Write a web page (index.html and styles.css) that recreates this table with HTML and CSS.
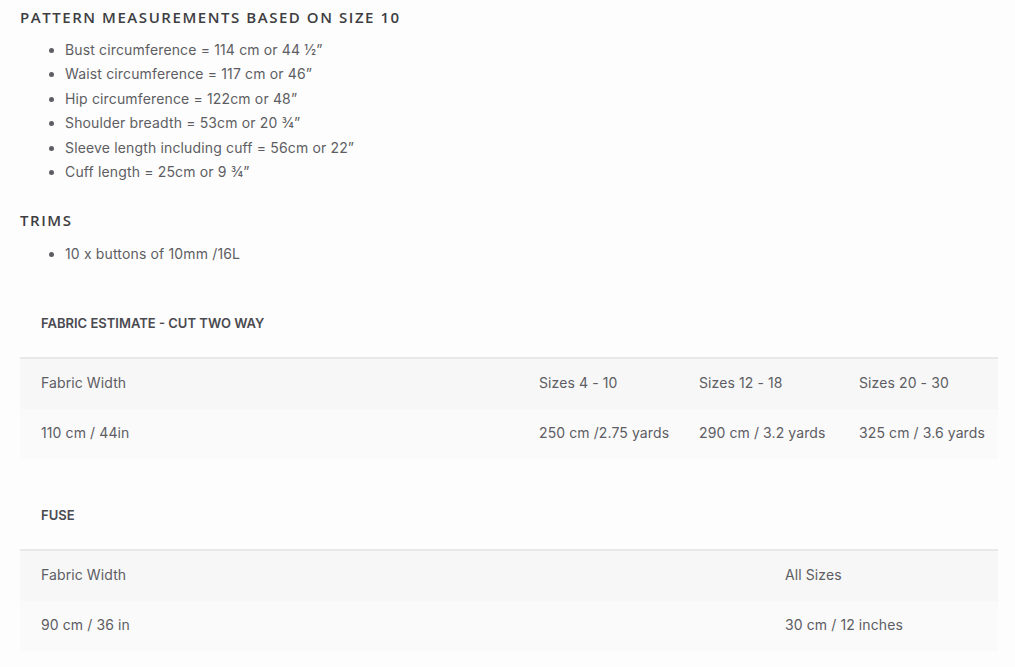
FILE: index.html
```html
<!DOCTYPE html>
<html lang="en">
<head>
<meta charset="utf-8">
<title>Pattern measurements</title>
<link rel="stylesheet" href="styles.css">
</head>
<body>
<main class="content">
  <h2 class="section-title">Pattern measurements based on size 10</h2>
  <ul class="spec-list">
    <li>Bust circumference = 114 cm or 44 ½”</li>
    <li>Waist circumference = 117 cm or 46”</li>
    <li>Hip circumference = 122cm or 48”</li>
    <li>Shoulder breadth = 53cm or 20 ¾”</li>
    <li>Sleeve length including cuff = 56cm or 22”</li>
    <li>Cuff length = 25cm or 9 ¾”</li>
  </ul>

  <h2 class="section-title section-title--trims">Trims</h2>
  <ul class="spec-list spec-list--trims">
    <li>10 x buttons of 10mm /16L</li>
  </ul>

  <table class="spec-table spec-table--fabric">
    <colgroup>
      <col class="c-first">
      <col class="c-size">
      <col class="c-size">
      <col class="c-size">
    </colgroup>
    <thead>
      <tr class="caption-row"><th colspan="4">FABRIC ESTIMATE - CUT TWO WAY</th></tr>
    </thead>
    <tbody>
      <tr class="row-head">
        <td>Fabric Width</td>
        <td>Sizes 4 - 10</td>
        <td>Sizes 12 - 18</td>
        <td>Sizes 20 - 30</td>
      </tr>
      <tr class="row-body">
        <td>110 cm / 44in</td>
        <td>250 cm /2.75 yards</td>
        <td>290 cm / 3.2 yards</td>
        <td>325 cm / 3.6 yards</td>
      </tr>
    </tbody>
  </table>

  <table class="spec-table spec-table--fuse">
    <colgroup>
      <col class="c-fuse-first">
      <col class="c-fuse-all">
    </colgroup>
    <thead>
      <tr class="caption-row"><th colspan="2">FUSE</th></tr>
    </thead>
    <tbody>
      <tr class="row-head">
        <td>Fabric Width</td>
        <td>All Sizes</td>
      </tr>
      <tr class="row-body">
        <td>90 cm / 36 in</td>
        <td>30 cm / 12 inches</td>
      </tr>
    </tbody>
  </table>
</main>
</body>
</html>
```

FILE: styles.css
```css
html, body {
  margin: 0;
  padding: 0;
  background: #fdfdfd;
}

body {
  font-family: Inter, "Open Sans", Arial, sans-serif;
  color: #5d5d63;
  font-size: 14px;
}

.content {
  padding: 7px 17px 0 20px;
}

.section-title {
  margin: 0;
  font-family: "Open Sans", Arial, sans-serif;
  font-weight: 600;
  font-size: 15px;
  line-height: 20px;
  letter-spacing: 1.55px;
  text-transform: uppercase;
  color: #3e3e42;
}

.section-title--trims {
  margin-top: 26px;
}

.spec-list {
  margin: 11px 0 0;
  padding-left: 45px;
}

.spec-list--trims {
  margin-top: 12px;
}

.spec-list li {
  line-height: 24.4px;
  letter-spacing: 0.15px;
}

.spec-table {
  width: 100%;
  border-collapse: collapse;
  table-layout: fixed;
  margin-top: 23px;
}

.spec-table--fuse {
  margin-top: 23px;
}

.c-first { width: 498px; }
.c-size { width: 160px; }
.c-fuse-first { width: 744px; }
.c-fuse-all { width: 234px; }

.spec-table th,
.spec-table td {
  padding: 0 0 0 21px;
  text-align: left;
  white-space: nowrap;
}

.caption-row th {
  font-size: 13px;
  font-weight: 600;
  color: #4a4a50;
  height: 67px;
  border-bottom: 2px solid #e8e8e8;
  letter-spacing: 0;
}

.row-head td,
.row-body td {
  height: 48px;
  padding-bottom: 2px;
  letter-spacing: 0.1px;
}

.row-head {
  background: #f7f7f7;
}

.row-body {
  background: #fafafa;
}
```
